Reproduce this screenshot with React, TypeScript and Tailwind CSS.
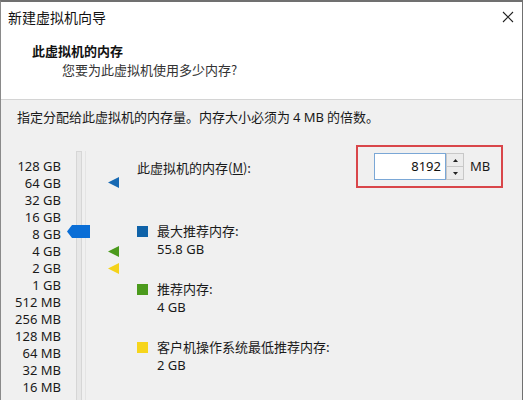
import React from 'react'

const cjk = { fontFamily: '"Noto Sans CJK SC", "Noto Sans", sans-serif' }
const latin = { fontFamily: '"Noto Sans", "Noto Sans CJK SC", sans-serif' }

const scale = [
  '128 GB', '64 GB', '32 GB', '16 GB', '8 GB', '4 GB', '2 GB', '1 GB',
  '512 MB', '256 MB', '128 MB', '64 MB', '32 MB', '16 MB', '4 MB',
]

function Marker({ color, top }: { color: string; top: number }) {
  return (
    <svg className="absolute left-[107px]" style={{ top }} width="11" height="11" viewBox="0 0 11 11">
      <polygon points="0,5.5 11,0 11,11" fill={color} />
    </svg>
  )
}

function Legend({ color, label, value }: { color: string; label: string; value: string }) {
  return (
    <div className="flex gap-[9px]">
      <div className="w-[11px] h-[11px] mt-[4px]" style={{ background: color }} />
      <div className="text-[13px] leading-[18px] text-[#1a1a1a]">
        <div style={cjk}>{label}</div>
        <div style={latin}>{value}</div>
      </div>
    </div>
  )
}

export default function App() {
  return (
    <div className="w-[524px] h-[400px] overflow-hidden bg-white">
      <div className="w-[523px] h-[400px] border-t-2 border-r border-l border-[#707070] border-l-[#8a8a8a] bg-[#f0f0f0] flex flex-col">
        <div className="h-[98px] shrink-0 bg-white border-b border-[#d4d4d4] relative" style={cjk}>
          <div className="pl-[7px] pt-[5px] text-[14px] leading-[20px] text-[#111]">新建虚拟机向导</div>
          <svg className="absolute right-[8px] top-[9px]" width="12" height="12" viewBox="0 0 12 12">
            <path d="M1 1 L11 11 M11 1 L1 11" stroke="#222" strokeWidth="1.1" />
          </svg>
          <div className="pl-[31px] pt-[14px] text-[13px] leading-[20px] font-bold text-[#111]">此虚拟机的内存</div>
          <div className="pl-[61px] text-[13px] leading-[18px] text-[#333]">您要为此虚拟机使用多少内存?</div>
        </div>

        <div className="shrink-0 pl-[16px] pt-[7px] text-[13px] leading-[20px] text-[#1a1a1a]" style={cjk}>
          指定分配给此虚拟机的内存量。内存大小必须为 <span style={latin}>4 MB</span> 的倍数。
        </div>

        <div className="flex mt-[30px] relative">
          <div className="relative w-[130px] shrink-0">
            <div className="flex flex-col items-end w-[60px] pt-[1px] text-[13px] leading-[17px] text-[#1a1a1a]" style={latin}>
              {scale.map(s => (
                <div key={s}>{s}</div>
              ))}
            </div>
            <div className="absolute left-[75px] top-[-6px] w-[6px] h-[300px] bg-[#e7e7e7] border border-[#d6d6d6]" />
            <div className="absolute left-[84px] top-[-6px] w-px h-[300px] bg-[#e4e4e4]" />
            <svg className="absolute left-[66px] top-[68px]" width="23" height="13" viewBox="0 0 23 13">
              <polygon points="0,6.5 5,0 23,0 23,13 5,13" fill="#0a6ed6" />
            </svg>
            <Marker color="#1769b3" top={20} />
            <Marker color="#4b9a1c" top={89} />
            <Marker color="#f4d21a" top={106} />
          </div>

          <div className="flex-1 pl-[6px]">
            <div className="flex items-start">
              <div className="pt-[2px] text-[13px] leading-[18px] text-[#1a1a1a]" style={cjk}>
                此虚拟机的内存(<span className="underline">M</span>):
              </div>
              <div className="ml-auto mr-[19px] mt-[-12px] w-[147px] h-[43px] border-2 border-[#d9464a] flex items-center pl-[16px]">
                <div className="w-[72px] h-[27px] bg-white border border-[#7aa7d6] flex items-center justify-end pr-[4px] text-[13px] text-[#111]" style={latin}>
                  8192
                </div>
                <div className="w-[18px] h-[27px] flex flex-col border border-[#c8c8c8] bg-[#ececec]">
                  <div className="flex-1 flex items-center justify-center border-b border-[#c8c8c8]">
                    <svg width="5" height="3" viewBox="0 0 5 3"><polygon points="2.5,0 5,3 0,3" fill="#222" /></svg>
                  </div>
                  <div className="flex-1 flex items-center justify-center">
                    <svg width="5" height="3" viewBox="0 0 5 3"><polygon points="0,0 5,0 2.5,3" fill="#222" /></svg>
                  </div>
                </div>
                <div className="ml-[6px] text-[13px] text-[#1a1a1a]" style={latin}>MB</div>
              </div>
            </div>

            <div className="flex flex-col gap-[22px] mt-[34px]">
              <Legend color="#0f62a8" label="最大推荐内存:" value="55.8 GB" />
              <Legend color="#4b9a1c" label="推荐内存:" value="4 GB" />
              <Legend color="#f6d51c" label="客户机操作系统最低推荐内存:" value="2 GB" />
            </div>
          </div>
        </div>
      </div>
    </div>
  )
}
